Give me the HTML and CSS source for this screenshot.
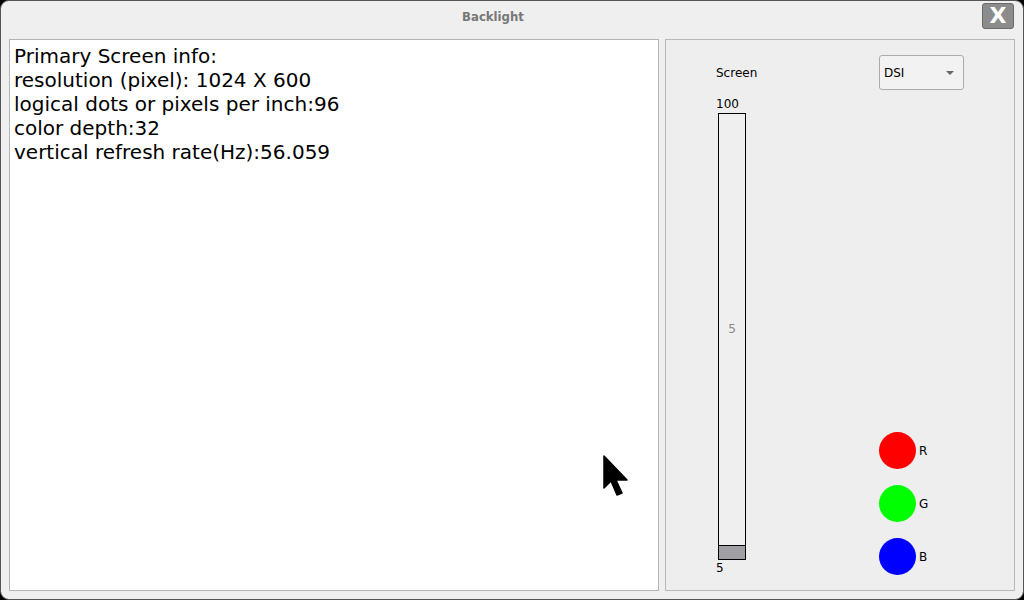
FILE: index.html
```html
<!DOCTYPE html>
<html>
<head>
<meta charset="utf-8">
<link rel="stylesheet" href="styles.css">
</head>
<body>
<div class="window">
  <div class="titlebar">
    <span class="title">Backlight</span>
    <button class="close">X</button>
  </div>
  <div class="content">
    <div class="info">
      <div>Primary Screen info:</div>
      <div>resolution (pixel): 1024 X 600</div>
      <div>logical dots or pixels per inch:96</div>
      <div>color depth:32</div>
      <div>vertical refresh rate(Hz):56.059</div>
    </div>
    <div class="panel">
      <div class="col-left">
        <div class="screen-label">Screen</div>
        <div class="max">100</div>
        <div class="slider">
          <span class="slider-val">5</span>
          <div class="handle"></div>
        </div>
        <div class="min">5</div>
      </div>
      <div class="col-right">
        <div class="combo"><span>DSI</span><span class="arrow"></span></div>
        <div class="leds">
          <div class="led"><span class="dot red"></span><span>R</span></div>
          <div class="led"><span class="dot green"></span><span>G</span></div>
          <div class="led"><span class="dot blue"></span><span>B</span></div>
        </div>
      </div>
    </div>
  </div>
  <svg class="cursor" width="28" height="48" viewBox="0 0 28 48">
    <path d="M1 1 L1 33 L8 26 L14 40 L19 38 L13 25 L24 25 Z" fill="#000" stroke="#000" stroke-width="1.5" stroke-linejoin="round"/>
  </svg>
</div>
</body>
</html>
```

FILE: styles.css
```css
* { box-sizing: border-box; }
html, body {
  margin: 0;
  padding: 0;
  width: 1024px;
  height: 600px;
  overflow: hidden;
  background: #000;
}
.window {
  position: relative;
  width: 1024px;
  height: 600px;
  background: #efefef;
  border: 1px solid #555;
  border-radius: 9px;
  display: flex;
  flex-direction: column;
  font-family: "DejaVu Sans", sans-serif;
}
.titlebar {
  height: 32px;
  position: relative;
  display: flex;
  align-items: center;
  justify-content: center;
  padding-right: 38px;
}
.title {
  font-family: "DejaVu Sans", sans-serif;
  font-stretch: condensed;
  font-weight: bold;
  font-size: 13px;
  color: #777;
  margin-top: -1px;
}
.close {
  position: absolute;
  right: 9px;
  top: 2px;
  width: 32px;
  height: 26px;
  background: #8c8c8c;
  border: 1px solid #6a6a6a;
  border-radius: 3px;
  color: #fff;
  font-family: "DejaVu Sans", sans-serif;
  font-weight: bold;
  font-size: 22px;
  line-height: 22px;
  padding: 0;
  display: flex;
  align-items: center;
  justify-content: center;
}
.content {
  flex: 1;
  display: flex;
  gap: 6px;
  padding: 6px 8px 8px 8px;
}
.info {
  width: 651px;
  background: #fff;
  border: 1px solid #b4b4b4;
  padding: 4px 4px;
  font-size: 20px;
  line-height: 24px;
  color: #000;
}
.panel {
  flex: 1;
  border: 1px solid #b8b8b8;
  background: #eee;
  display: flex;
  padding: 26px 50px 15px 50px;
  font-size: 12px;
  color: #000;
}
.col-left {
  width: 163px;
  display: flex;
  flex-direction: column;
}
.screen-label {
  height: 14px;
  line-height: 14px;
}
.max {
  margin-top: 17px;
  height: 14px;
  line-height: 14px;
  margin-bottom: 2px;
}
.slider {
  width: 28px;
  height: 447px;
  margin-left: 2px;
  border: 1px solid #000;
  background: #efefef;
  position: relative;
  display: flex;
  flex-direction: column;
  justify-content: flex-end;
  align-items: center;
}
.slider-val {
  position: absolute;
  top: 208px;
  left: 0;
  right: 0;
  text-align: center;
  color: #888;
  font-size: 12px;
}
.handle {
  width: 28px;
  height: 15px;
  margin-bottom: -1px;
  background: #a0a0a4;
  border: 1px solid #000;
}
.min {
  height: 14px;
  line-height: 14px;
  margin-top: 1px;
}
.col-right {
  flex: 1;
  display: flex;
  flex-direction: column;
  margin-top: -11px;
}
.combo {
  width: 85px;
  height: 35px;
  border: 1px solid #ababab;
  border-radius: 3px;
  background: #f2f2f2;
  display: flex;
  align-items: center;
  justify-content: space-between;
  padding: 0 9px 0 4px;
}
.arrow {
  width: 0;
  height: 0;
  border-left: 4px solid transparent;
  border-right: 4px solid transparent;
  border-top: 4px solid #666;
}
.leds {
  margin-top: auto;
  display: flex;
  flex-direction: column;
  gap: 16px;
}
.led {
  display: flex;
  align-items: center;
  gap: 3px;
}
.dot {
  width: 37px;
  height: 37px;
  border-radius: 50%;
}
.red { background: #ff0000; }
.green { background: #00ff00; }
.blue { background: #0000ff; }
.cursor {
  position: absolute;
  left: 602px;
  top: 454px;
}
```
